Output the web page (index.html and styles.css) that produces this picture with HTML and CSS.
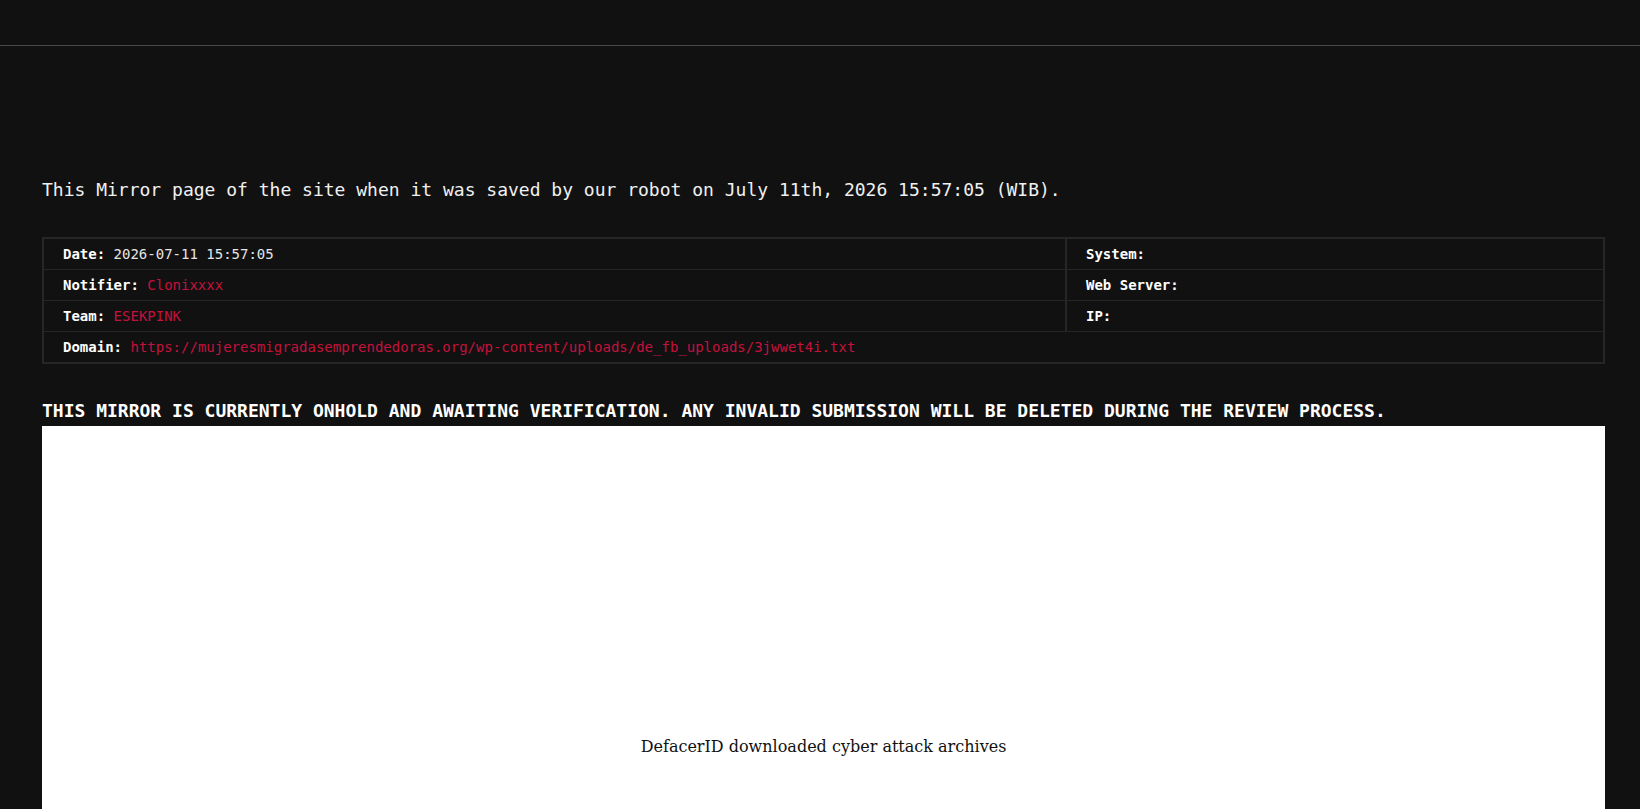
FILE: index.html
```html
<!DOCTYPE html>
<html lang="en">
<head>
<meta charset="utf-8" />
<title>Mirror - Clonixxxx</title>
<link rel="stylesheet" href="styles.css">
</head>
<body class="page">
	<header class="topbar"></header>
	<div class="content">
		<p class="intro">This Mirror page of the site when it was saved by our robot on July 11th, 2026 15:57:05 (WIB).</p>
		<table class="info">
			<tr>
				<td class="col-main"><b>Date:</b> 2026-07-11 15:57:05</td>
				<td><b>System:</b></td>
			</tr>
			<tr>
				<td class="col-main"><b>Notifier:</b> <span class="red">Clonixxxx</span></td>
				<td><b>Web Server:</b></td>
			</tr>
			<tr>
				<td class="col-main"><b>Team:</b> <span class="red">ESEKPINK</span></td>
				<td><b>IP:</b></td>
			</tr>
			<tr>
				<td colspan="2"><b>Domain:</b> <span class="red">https://mujeresmigradasemprendedoras.org/wp-content/uploads/de_fb_uploads/3jwwet4i.txt</span></td>
			</tr>
		</table>
		<h3 class="notice">THIS MIRROR IS CURRENTLY ONHOLD AND AWAITING VERIFICATION. ANY INVALID SUBMISSION WILL BE DELETED DURING THE REVIEW PROCESS.</h3>
		<div class="mirror">
			<span class="mirror-text">DefacerID downloaded cyber attack archives</span>
		</div>
	</div>
</body>
</html>
```

FILE: styles.css
```css
html {
	width: 100%;
	height: 100%;
}

.page {
	margin: 0;
	background-color: #111111;
	color: #eeeeee;
	font-family: "DejaVu Sans Mono", "Liberation Mono", monospace;
	overflow: hidden;
}

.topbar {
	height: 45px;
	border-bottom: 1px solid #4a4a4a;
}

.content {
	padding: 0 35px 0 42px;
}

.intro {
	margin: 130px 0 0 0;
	font-size: 18px;
	line-height: 28px;
	color: #f0f0f0;
}

.info {
	width: 100%;
	margin-top: 33px;
	border-collapse: collapse;
	border: 2px solid #262626;
	font-size: 14px;
	color: #e6e6e6;
}

.info td {
	height: 30px;
	padding: 0 19px;
	border: 1px solid #262626;
	line-height: 16px;
	vertical-align: middle;
}

.info .col-main {
	width: 983px;
	border-right-width: 2px;
}

.info b {
	color: #ffffff;
}

.red {
	color: #c4123e;
}

.notice {
	margin: 35px 0 3px 0;
	font-size: 18px;
	line-height: 24px;
	font-weight: bold;
	color: #ffffff;
}

.mirror {
	height: 640px;
	background-color: #ffffff;
	display: flex;
	align-items: center;
	justify-content: center;
}

.mirror-text {
	font-family: "DejaVu Serif", serif;
	font-size: 16px;
	color: #111111;
}
```
